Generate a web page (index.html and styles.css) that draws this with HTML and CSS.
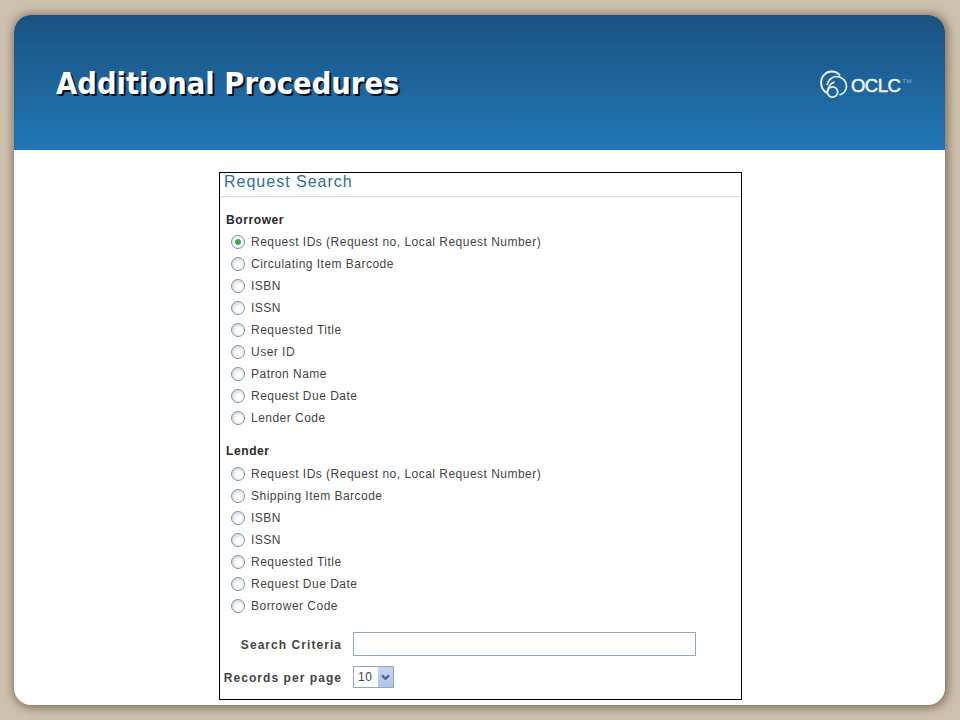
FILE: index.html
```html
<!DOCTYPE html>
<html lang="en">
<head>
<meta charset="utf-8">
<title>Additional Procedures</title>
<link rel="stylesheet" href="styles.css">
</head>
<body>
<main class="slide">
  <header class="banner">
    <h1 class="banner-title">Additional Procedures</h1>
    <div class="logo">
      <svg class="logo-mark" width="28" height="29" viewBox="0 0 28 29" fill="none" stroke="#eef5fa">
        <path d="M7 23C2.500 20.500 1.100 16.500 1.100 12.500 1.100 6 6 1.500 11.500 1.500c3.500 0 6.500 1.500 8.500 4" stroke-width="1.900"/>
        <path d="M7 15c1-4.500 4.500-8.500 9.500-8.500 5.500 0 10 4.500 10 9.500 0 4-2.500 7.500-7 9" stroke-width="1.700"/>
        <path d="M8 21.500c-.5-4 2-8 6.500-9.500" stroke-width="1.500"/>
        <circle cx="12.500" cy="22" r="5.200" stroke-width="1.700"/>
      </svg>
      <span class="logo-word">OCLC</span><span class="logo-tm">TM</span>
    </div>
  </header>
  <section class="content">
    <form class="panel">
      <h2 class="panel-title">Request Search</h2>
      <div class="panel-body">
        <h3 class="group-title">Borrower</h3>
        <ul class="options">
          <li class="option"><span class="radio radio-on"></span>Request IDs (Request no, Local Request Number)</li>
          <li class="option"><span class="radio"></span>Circulating Item Barcode</li>
          <li class="option"><span class="radio"></span>ISBN</li>
          <li class="option"><span class="radio"></span>ISSN</li>
          <li class="option"><span class="radio"></span>Requested Title</li>
          <li class="option"><span class="radio"></span>User ID</li>
          <li class="option"><span class="radio"></span>Patron Name</li>
          <li class="option"><span class="radio"></span>Request Due Date</li>
          <li class="option"><span class="radio"></span>Lender Code</li>
        </ul>
        <h3 class="group-title group-gap">Lender</h3>
        <ul class="options">
          <li class="option"><span class="radio"></span>Request IDs (Request no, Local Request Number)</li>
          <li class="option"><span class="radio"></span>Shipping Item Barcode</li>
          <li class="option"><span class="radio"></span>ISBN</li>
          <li class="option"><span class="radio"></span>ISSN</li>
          <li class="option"><span class="radio"></span>Requested Title</li>
          <li class="option"><span class="radio"></span>Request Due Date</li>
          <li class="option"><span class="radio"></span>Borrower Code</li>
        </ul>
        <div class="field field-search">
          <label class="field-label">Search Criteria</label>
          <input class="search-input" type="text">
        </div>
        <div class="field field-records">
          <label class="field-label">Records per page</label>
          <div class="select">
            <span class="select-value">10</span>
            <span class="select-button">
              <svg width="9" height="7" viewBox="0 0 9 7" fill="none" stroke="#4d6185" stroke-width="2.200"><path d="M1 1.200l3.500 3.600L8 1.200"/></svg>
            </span>
          </div>
        </div>
      </div>
    </form>
  </section>
</main>
</body>
</html>
```
FILE: styles.css
```css
* { box-sizing: border-box; }
html, body { margin: 0; height: 720px; overflow: hidden; }
body {
  background: #cdc0ae;
  padding: 15px 15px 15px 14px;
  font-family: "Liberation Sans", Arial, sans-serif;
}
.slide {
  height: 690px;
  border-radius: 17px;
  background: #fff;
  overflow: hidden;
  display: flex;
  flex-direction: column;
  box-shadow: 1px 1px 10px 2px #84705a;
}
.banner {
  height: 135px;
  flex: none;
  background: linear-gradient(#1a5280, #2176b5);
  display: flex;
  justify-content: space-between;
  align-items: flex-start;
}
.banner-title {
  margin: 50px 0 0 42px;
  font-family: "DejaVu Sans", sans-serif;
  font-stretch: condensed;
  font-size: 30.500px;
  line-height: 38px;
  font-weight: 700;
  color: #fff;
  text-shadow: 2px 2px 0 #06111c;
}
.logo {
  display: flex;
  align-items: flex-start;
  margin: 55px 33px 0 0;
  color: #eef5fa;
}
.logo-mark { display: block; margin-right: 3px; }
.logo-word {
  font-family: "Liberation Sans", sans-serif;
  font-size: 18.500px;
  line-height: 18px;
  font-weight: 400;
  letter-spacing: -.5px;
  -webkit-text-stroke: .5px #eef5fa;
  margin-top: 7px;
}
.logo-tm { font-size: 6px; line-height: 7px; margin: 8px 0 0 2px; letter-spacing: .5px; color: #8fb6d3; }
.content { flex: 1; padding: 22px 0 0 205px; }
.panel {
  width: 523px;
  height: 528px;
  border: 1px solid #000;
  background: #fff;
}
.panel-title {
  margin: 0;
  height: 24px;
  padding: 0 0 0 4px;
  border-bottom: 1px solid #d8d8d8;
  font-size: 16px;
  line-height: 17px;
  font-weight: 400;
  letter-spacing: 1px;
  color: #2a6f9e;
}
.panel-body { padding: 14px 0 0 6px; }
.group-title {
  margin: 0 0 1px;
  height: 19px;
  font-size: 12px;
  line-height: 19px;
  font-weight: 700;
  letter-spacing: .6px;
  color: #2a2a2a;
}
.group-gap { margin: 13px 0 2px; }
.options { list-style: none; margin: 0; padding: 0; }
.option {
  display: flex;
  align-items: center;
  height: 22px;
  padding-left: 5px;
  font-size: 12px;
  letter-spacing: .48px;
  color: #444;
}
.radio {
  width: 14px;
  height: 14px;
  border-radius: 50%;
  margin: 0 6px 0 0;
  border: 1px solid #7d93a3;
  background: radial-gradient(circle at 62% 62%, #fff 25%, #c9d0d6 90%);
  flex: none;
}
.radio-on { background: radial-gradient(circle, #3fa553 0 2.500px, #fff 3.500px, #d8dee2 100%); }
.field {
  display: flex;
  align-items: center;
  margin-left: -3px;
}
.field-search { margin-top: 15px; height: 24px; }
.field-records { margin-top: 9px; height: 24px; }
.field-label {
  width: 119px;
  margin: 1px 11px 0 0;
  text-align: right;
  font-size: 12px;
  font-weight: 700;
  letter-spacing: 1.050px;
  color: #444;
}
.search-input {
  width: 343px;
  height: 24px;
  margin: 0;
  padding: 0;
  border: 1px solid #8fa9b8;
  background: #fff;
}
.select {
  width: 41px;
  height: 22px;
  border: 1px solid #8fa9c4;
  display: flex;
  justify-content: space-between;
  background: #fff;
}
.select-value {
  padding-left: 4px;
  font-size: 12px;
  line-height: 20px;
  letter-spacing: .5px;
  color: #444;
}
.select-button {
  width: 15px;
  background: linear-gradient(#c5d5f2, #b0c4ea);
  display: flex;
  align-items: center;
  justify-content: center;
}
```
